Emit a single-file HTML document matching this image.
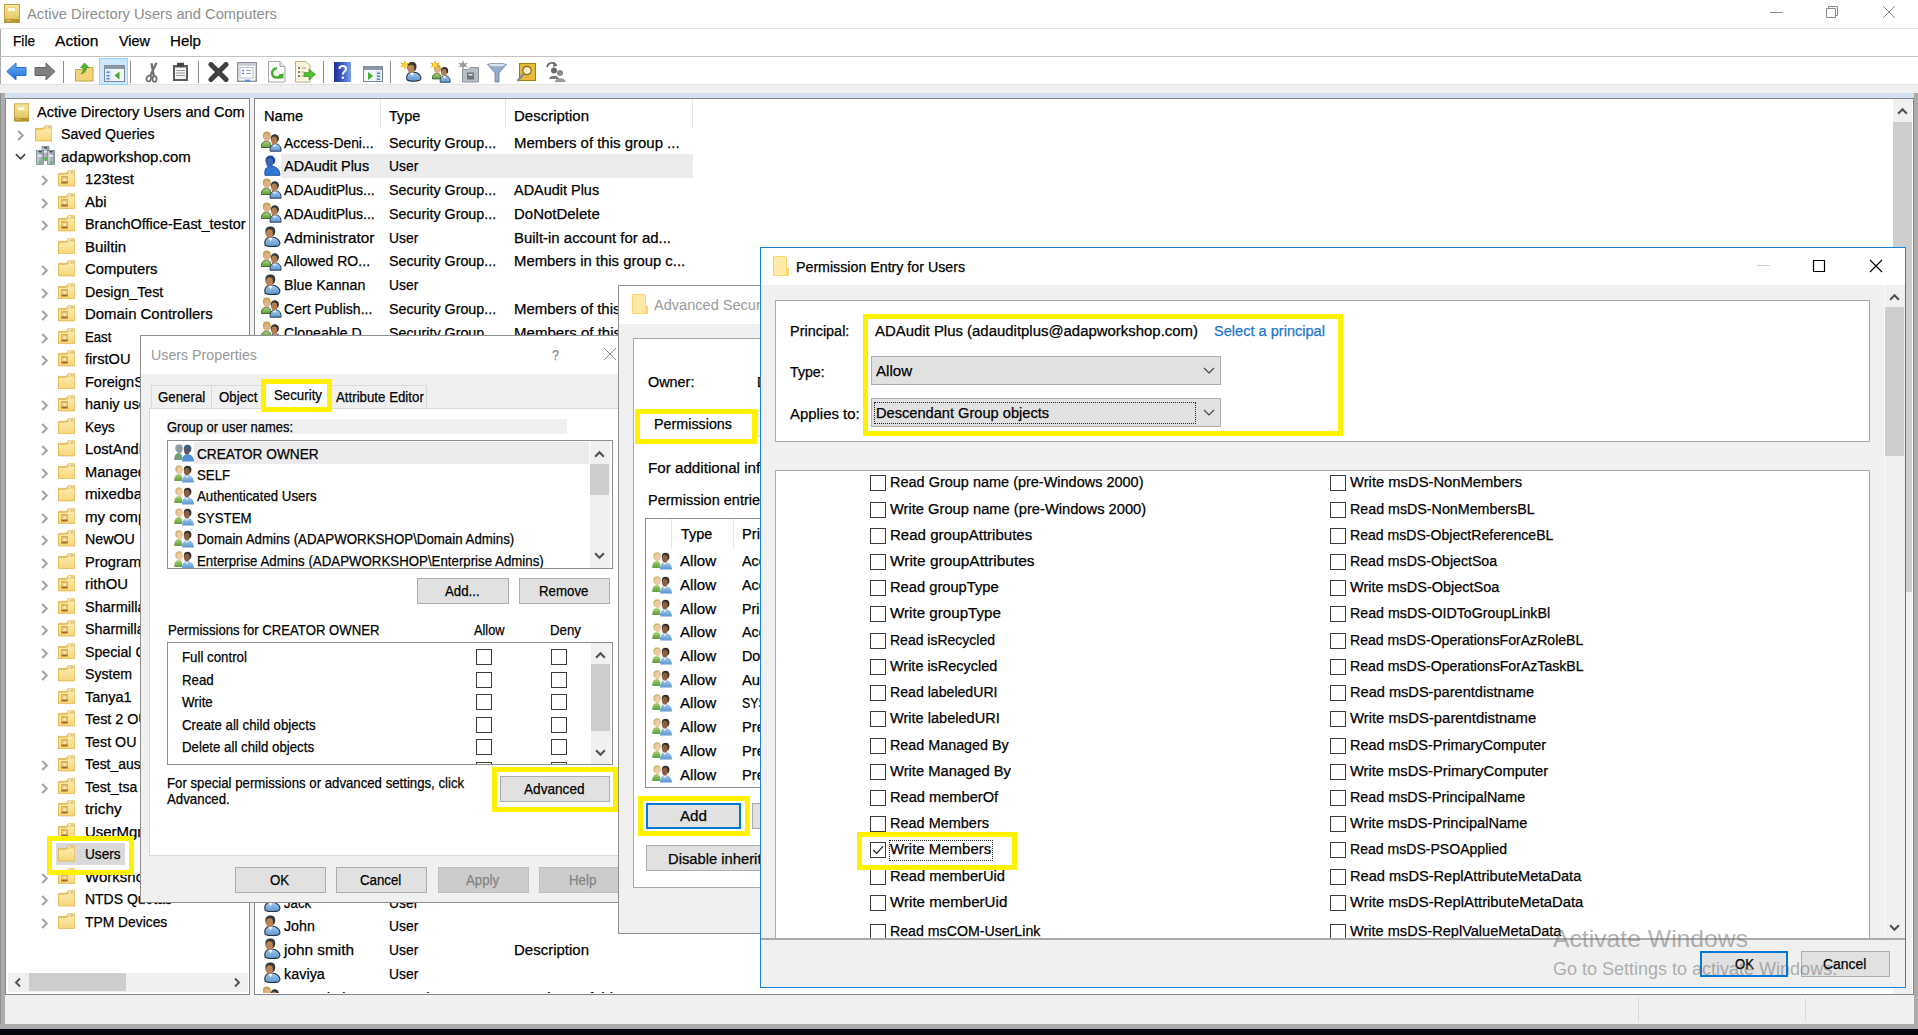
<!DOCTYPE html>
<html lang="en">
<head>
<meta charset="utf-8">
<title>Active Directory Users and Computers</title>
<style>
html,body{margin:0;padding:0}
body{width:1918px;height:1035px;overflow:hidden;background:#fff;font-family:"Liberation Sans",sans-serif;font-size:15px}
#root{position:relative;width:1918px;height:1035px;overflow:hidden;background:#fff}
#root div,#root span.t,#root svg.i{position:absolute;box-sizing:border-box}
.t{white-space:pre;transform-origin:0 50%;display:block;-webkit-text-stroke:0.25px currentColor}
.layer{left:0;top:0;width:1918px;height:1035px}
.btn{background:#e1e1e1;border:1px solid #adadad}
.btnd{background:#cccccc;border:1px solid #bfbfbf}
.btnf{background:#e1e1e1;border:2px solid #0078d7}
.cb{background:#fff;border:1px solid #3c3c3c}
.yl{border:5px solid #fff200}
.wp{background:#fff;border:1px solid #a9a9a9}
.lb{background:#fff;border:1px solid #8b8e94}
.g{background:#f0f0f0}
.thumb{background:#cdcdcd}
</style>
</head>
<body>
<svg width="0" height="0" style="position:absolute">
<defs>
<linearGradient id="gRoot" x1="0" y1="0" x2="0" y2="1"><stop offset="0" stop-color="#f6e9a6"/><stop offset="1" stop-color="#dfbe52"/></linearGradient>
<linearGradient id="gFold" x1="0" y1="0" x2="0" y2="1"><stop offset="0" stop-color="#fdebb0"/><stop offset="1" stop-color="#f6d679"/></linearGradient>
<linearGradient id="gBlue" x1="0" y1="0" x2="0" y2="1"><stop offset="0" stop-color="#6db3f2"/><stop offset="1" stop-color="#1e69de"/></linearGradient>
<linearGradient id="gShirt" x1="0" y1="0" x2="0" y2="1"><stop offset="0" stop-color="#a9cdee"/><stop offset="1" stop-color="#5b93cf"/></linearGradient>
<linearGradient id="gGreen" x1="0" y1="0" x2="0" y2="1"><stop offset="0" stop-color="#a8d27a"/><stop offset="1" stop-color="#5f9f3a"/></linearGradient>
<linearGradient id="gSrv" x1="0" y1="0" x2="1" y2="0"><stop offset="0" stop-color="#c9d2d8"/><stop offset="1" stop-color="#8f9ba3"/></linearGradient>

<symbol id="ic-root" viewBox="0 0 16 19">
<rect x="0.5" y="0.5" width="15" height="18" fill="url(#gRoot)" stroke="#c4a23c"/>
<rect x="3.5" y="3.5" width="8" height="4" fill="#fffbe0" stroke="#ead77f"/>
<rect x="0.5" y="15" width="15" height="3.5" fill="#b8932f"/>
<rect x="2" y="16" width="5" height="1" fill="#d9c27a"/>
</symbol>

<symbol id="ic-folder" viewBox="0 0 18 17">
<path d="M0.5 3.5 H8.5 L10.5 0.8 H17.5 V16.5 H0.5 Z" fill="#f5d57a" stroke="#e3bf57"/>
<rect x="10.5" y="1.6" width="6" height="2.4" fill="#fff"/>
<rect x="13.5" y="1.8" width="2" height="1" fill="#6aa5e8"/>
<path d="M0.5 4.5 H9 L11 3 H17.5 V16.5 H0.5 Z" fill="url(#gFold)" stroke="#ddb852" stroke-width="0.9"/>
</symbol>

<symbol id="ic-ou" viewBox="0 0 18 17">
<path d="M0.5 3.5 H8.5 L10.5 0.8 H17.5 V16.5 H0.5 Z" fill="#f5d57a" stroke="#e3bf57"/>
<rect x="10.5" y="1.6" width="6" height="2.4" fill="#fff"/>
<rect x="13.5" y="1.8" width="2" height="1" fill="#6aa5e8"/>
<path d="M0.5 4.5 H9 L11 3 H17.5 V16.5 H0.5 Z" fill="url(#gFold)" stroke="#ddb852" stroke-width="0.9"/>
<rect x="3.6" y="6.6" width="6.4" height="7.2" fill="#ecd078" stroke="#d2ad4c" stroke-width="0.7"/>
<rect x="3.6" y="6.6" width="6.4" height="1.2" fill="#cfae55"/>
<rect x="3.6" y="12" width="6.4" height="1.8" fill="#a8682a"/>
<rect x="5.8" y="9.2" width="1.8" height="1.6" fill="#fffbe6"/>
</symbol>

<symbol id="ic-domain" viewBox="0 0 19 19">
<rect x="6" y="0.5" width="7" height="14" fill="url(#gSrv)" stroke="#7d8a93" stroke-width="0.8"/>
<ellipse cx="9.5" cy="1.8" rx="2" ry="0.8" fill="#3a4248"/>
<rect x="7.5" y="5" width="4" height="1.6" fill="#eef2f5"/>
<rect x="0.5" y="4.5" width="7" height="14" fill="url(#gSrv)" stroke="#7d8a93" stroke-width="0.8"/>
<ellipse cx="4" cy="5.8" rx="2" ry="0.8" fill="#3a4248"/>
<rect x="2" y="9" width="4" height="1.6" fill="#eef2f5"/>
<rect x="11.5" y="4.5" width="7" height="14" fill="url(#gSrv)" stroke="#7d8a93" stroke-width="0.8"/>
<ellipse cx="15" cy="5.8" rx="2" ry="0.8" fill="#3a4248"/>
<rect x="13" y="9" width="4" height="1.6" fill="#eef2f5"/>
<circle cx="9.5" cy="12.5" r="1.6" fill="#4cc23a"/>
<circle cx="4" cy="16.5" r="1.3" fill="#4cc23a"/>
<circle cx="15" cy="16.5" r="1.3" fill="#4cc23a"/>
</symbol>

<symbol id="ic-user" viewBox="0 0 20 21">
<path d="M4.300 19.4 C3 16 4.200 11.6 9 11 C13 10.6 15.5 11.8 17.6 14.2 C19.6 16.6 19.2 18.8 17.4 19.8 C14 21 7 21 4.300 19.400 Z" fill="url(#gShirt)" stroke="#22303f" stroke-width="1.1"/>
<path d="M7.800 11.8 L9.600 15.4 L11.6 11.8 Z" fill="#f4f7fa"/>
<path d="M4.400 6 C4 2 6.500 0.500 9.600 0.500 C13 0.500 14.6 2.600 14.2 6 C14 8.500 13 9.500 12 10 L6.500 10 C5 9 4.600 8 4.400 6 Z" fill="#3b3835"/>
<ellipse cx="8.500" cy="7.700" rx="3.400" ry="4.400" fill="#b98558"/>
</symbol>

<symbol id="ic-usersel" viewBox="0 0 20 21">
<path d="M4 20.3 C3.2 15.5 5 11.5 9.5 11 C14.5 10.8 19.2 14.5 18.8 20.3 Z" fill="#2f78d6" stroke="#1c4f9e" stroke-width="1"/>
<ellipse cx="9.3" cy="5.4" rx="4.9" ry="4.9" fill="#1f4a9a"/>
<ellipse cx="8.6" cy="7.7" rx="3.5" ry="4.4" fill="#3f68b0"/>
</symbol>

<symbol id="ic-group" viewBox="0 0 21 21">
<path d="M0.500 16.5 C0 12.5 2 10.5 5.500 10.3 C9 10.3 10 12.5 9.800 16.5 Z" fill="url(#gGreen)" stroke="#3e5a2a" stroke-width="0.9"/>
<ellipse cx="5.8" cy="4.7" rx="3.9" ry="4.3" fill="#c5a247"/>
<ellipse cx="5.8" cy="6.5" rx="2.9" ry="4" fill="#e1b184"/>
<path d="M9.200 20.2 C8.600 16 10.5 13 14 12.8 C18 12.8 20.4 15.5 20 20.2 Z" fill="url(#gShirt)" stroke="#2b3f55" stroke-width="1"/>
<path d="M12.2 13.4 L13.8 16.2 L15.4 13.4 Z" fill="#f4f7fa"/>
<ellipse cx="13.8" cy="7.5" rx="4.1" ry="4.2" fill="#35322f"/>
<ellipse cx="13.2" cy="9.4" rx="3" ry="4" fill="#b27d52"/>
</symbol>

<symbol id="ic-prin" viewBox="0 0 20 18">
<path d="M0.300 16 C0 12 1.600 9.400 4.600 9 C7.600 9 8.600 12 8.400 16 Z" fill="url(#gGreen)"/>
<ellipse cx="5" cy="4.200" rx="3.700" ry="4" fill="#d8b877"/>
<ellipse cx="5.600" cy="5.600" rx="2.800" ry="3.600" fill="#ebcba6"/>
<path d="M8.200 17.6 C7.800 13.5 9.600 10.4 13.2 10 C17.2 10 20.2 13.5 19.9 17.6 Z" fill="url(#gShirt)"/>
<path d="M11.4 10.6 L12.8 13.2 L14.4 10.6 Z" fill="#eef3f8"/>
<ellipse cx="13.6" cy="4.800" rx="3.800" ry="4" fill="#34302d"/>
<ellipse cx="12.9" cy="6.600" rx="2.800" ry="3.900" fill="#8a5f40"/>
</symbol>

<symbol id="ic-prinsel" viewBox="0 0 20 18">
<path d="M0.300 16 C0 12 1.600 9.400 4.600 9 C7.600 9 8.600 12 8.400 16 Z" fill="#6f9f78"/>
<ellipse cx="5" cy="4.200" rx="3.700" ry="4" fill="#9aa3a0"/>
<ellipse cx="5.600" cy="5.600" rx="2.800" ry="3.600" fill="#8f9aa2"/>
<path d="M8.200 17.6 C7.800 13.5 9.600 10.4 13.2 10 C17.2 10 20.2 13.5 19.9 17.6 Z" fill="#4f8fd6"/>
<ellipse cx="13.6" cy="4.800" rx="3.800" ry="4" fill="#3c5f8e"/>
<ellipse cx="12.9" cy="6.600" rx="2.800" ry="3.900" fill="#55585e"/>
</symbol>

<symbol id="ic-dlgfolder" viewBox="0 0 16 20">
<path d="M0.500 0.500 H12.5 L13.5 1.500 V12 H15.5 V19.5 H0.500 Z" fill="#ffe9a8" stroke="#ffd466" stroke-width="1"/>
<path d="M13.5 12 H15.5 V19.5 H13.5 Z" fill="#ffd466"/>
</symbol>

<symbol id="ch-r" viewBox="0 0 8 12"><path d="M1.2 1 L6.2 6 L1.2 11" fill="none" stroke="#a3a3a3" stroke-width="2.2"/></symbol>
<symbol id="ch-d" viewBox="0 0 12 8"><path d="M1 1.2 L6 6.2 L11 1.2" fill="none" stroke="#404040" stroke-width="1.8"/></symbol>
<symbol id="sb-u" viewBox="0 0 10 7"><path d="M1 6 L5 2 L9 6" fill="none" stroke="#505050" stroke-width="1.9"/></symbol>
<symbol id="sb-d" viewBox="0 0 10 7"><path d="M1 1 L5 5 L9 1" fill="none" stroke="#505050" stroke-width="1.9"/></symbol>
<symbol id="sb-l" viewBox="0 0 7 10"><path d="M6 1 L2 5 L6 9" fill="none" stroke="#505050" stroke-width="1.9"/></symbol>
<symbol id="sb-r" viewBox="0 0 7 10"><path d="M1 1 L5 5 L1 9" fill="none" stroke="#505050" stroke-width="1.9"/></symbol>
<symbol id="cmb" viewBox="0 0 12 7"><path d="M1 1 L6 6 L11 1" fill="none" stroke="#444" stroke-width="1.2"/></symbol>
</defs>
</svg>
<div id="root">
<div class="layer" id="main">
<svg class="i" style="left:4px;top:4px" width="16" height="19"><use href="#ic-root"/></svg>
<span class="t " style="left:27.0px;top:4.4px;font-size:15.5px;line-height:19px;color:#8e8e8e;transform:scaleX(0.948);-webkit-text-stroke:0;">Active Directory Users and Computers</span>
<svg class="i" style="left:1760px;top:-1px" width="150" height="28"><g stroke="#8a8a8a" stroke-width="1" fill="none"><path d="M10 13.5 H22.5"/><path d="M66.500 9.5 H75.5 V18.5 H66.500 Z M68.5 9.500 V7.500 H77.5 V16.5 H75.5"/><path d="M123 7 L135 19 M135 7 L123 19"/></g></svg>
<div class="" style="left:0px;top:28px;width:1918px;height:1px;background:#e3e3e3"></div>
<div class="" style="left:0px;top:29px;width:1px;height:64px;background:#ababab"></div>
<span class="t " style="left:13.0px;top:31.4px;font-size:15.5px;line-height:19px;color:#000;transform:scaleX(0.881);">File</span>
<span class="t " style="left:55.0px;top:31.4px;font-size:15.5px;line-height:19px;color:#000;transform:scaleX(1.009);">Action</span>
<span class="t " style="left:119.0px;top:31.4px;font-size:15.5px;line-height:19px;color:#000;transform:scaleX(0.930);">View</span>
<span class="t " style="left:170.0px;top:31.4px;font-size:15.5px;line-height:19px;color:#000;transform:scaleX(0.972);">Help</span>
<div class="" style="left:0px;top:56px;width:1918px;height:1px;background:#c3c3c3"></div>
<div class="" style="left:0px;top:84px;width:1918px;height:9px;background:#f0f0f0"></div>
<div class="" style="left:0px;top:84px;width:1918px;height:1px;background:#e4e4e4"></div>
<div class="" style="left:0px;top:93px;width:1918px;height:5px;background:#d3e0ef"></div>
<div class="" style="left:0px;top:93px;width:5px;height:936px;background:#ababab"></div>
<div class="" style="left:0px;top:93px;width:1px;height:936px;background:#909090"></div>
<div class="" style="left:1914px;top:93px;width:4px;height:936px;background:#ababab"></div>
<div class="" style="left:5px;top:995px;width:1909px;height:29px;background:#f0f0f0"></div>
<div class="" style="left:0px;top:1024px;width:1918px;height:5px;background:#ababab"></div>
<div class="" style="left:1638px;top:998px;width:1px;height:24px;background:#dadada"></div>
<div class="" style="left:1805px;top:998px;width:1px;height:24px;background:#dadada"></div>
<div class="" style="left:0px;top:1029px;width:1918px;height:6px;background:#04060b"></div>
<div class="" style="left:5px;top:98px;width:245px;height:897px;background:#fff;border:1px solid #828790"></div>
<div class="" style="left:250px;top:98px;width:4px;height:897px;background:#f0f0f0"></div>
<div class="" style="left:254px;top:98px;width:1660px;height:897px;background:#fff;border:1px solid #828790"></div>
<svg class="i" style="left:6px;top:62px" width="21" height="20" viewBox="0 0 21 20"><path d="M0.800 9.500 L10 1 V5.500 H20 V13.5 H10 V18 Z" fill="url(#gBlue)" stroke="#2a6fc9" stroke-width="1"/></svg>
<svg class="i" style="left:34px;top:62px" width="22" height="20" viewBox="0 0 22 20"><path d="M21 9.500 L12 1 V5.500 H1 V13.5 H12 V18 Z" fill="#808080" stroke="#666" stroke-width="1"/></svg>
<div class="" style="left:63px;top:61px;width:1px;height:22px;background:#8d8d8d"></div>
<svg class="i" style="left:75px;top:62px" width="19" height="20" viewBox="0 0 19 20"><path d="M0.500 7.500 H7 L9 5.500 H18 V19 H0.500 Z" fill="#f3d27a" stroke="#caa445"/><path d="M9.500 1 L14 5.500 H11.5 C11.5 9 9.500 11 6 12 C8 10 8.500 8 8 5.500 H5.500 Z" fill="#4cb82e" stroke="#2f8f1c" stroke-width="0.6"/></svg>
<div class="" style="left:99px;top:58px;width:29px;height:27px;background:#cce8ff;border:1px solid #99d1ff"></div>
<svg class="i" style="left:104px;top:65px" width="21" height="17" viewBox="0 0 21 17"><rect x="0.500" y="0.500" width="20" height="16" fill="#f4f6f9" stroke="#7a8796"/><rect x="0.500" y="0.500" width="20" height="3.5" fill="#8b98a8"/><rect x="1.500" y="5" width="6" height="11" fill="#dfe7f1"/><rect x="2.5" y="6.500" width="3" height="1.5" fill="#4a86d8"/><rect x="2.5" y="10" width="3" height="1.5" fill="#4a86d8"/><rect x="2.5" y="13" width="3" height="1.5" fill="#4a86d8"/><path d="M15.5 6.500 V14.5 L10.5 10.5 Z" fill="#3fae2a"/></svg>
<div class="" style="left:130px;top:61px;width:1px;height:22px;background:#8d8d8d"></div>
<svg class="i" style="left:144px;top:62px" width="17" height="21" viewBox="0 0 17 21"><path d="M12.5 0.800 L6.200 14 M7.500 1.200 L9.800 14" stroke="#6e6e6e" stroke-width="2.2" fill="none"/><ellipse cx="4.800" cy="16.6" rx="2.200" ry="2.900" fill="none" stroke="#6e6e6e" stroke-width="1.7" transform="rotate(20 4.800 16.6)"/><ellipse cx="10.6" cy="17" rx="2" ry="2.800" fill="none" stroke="#6e6e6e" stroke-width="1.7"/></svg>
<svg class="i" style="left:172px;top:62px" width="17" height="20" viewBox="0 0 17 20"><rect x="1" y="3" width="15" height="16" fill="#5c5c5c"/><rect x="3" y="5.500" width="11" height="11.5" fill="#f4f4f4"/><rect x="5" y="0.800" width="7" height="4" fill="#444"/><path d="M4 8.500 H13 M4 11 H13 M4 13.5 H13" stroke="#9a9a9a" stroke-width="1"/></svg>
<div class="" style="left:198px;top:61px;width:1px;height:22px;background:#8d8d8d"></div>
<svg class="i" style="left:208px;top:62px" width="21" height="20" viewBox="0 0 21 20"><path d="M3 2.500 L18 17.5 M18 2.500 L3 17.5" stroke="#404040" stroke-width="5" stroke-linecap="round"/></svg>
<svg class="i" style="left:237px;top:62px" width="20" height="22" viewBox="0 0 20 22"><rect x="0.700" y="0.700" width="18.6" height="18.6" fill="#f7f9fc" stroke="#8c929a" stroke-width="1.4"/><rect x="1.400" y="1.400" width="17.2" height="2.400" fill="#c5ccd6"/><rect x="3" y="5.500" width="13" height="10.5" fill="#fff" stroke="#aab4c2" stroke-width="0.8"/><path d="M5 8.500 H7 M5 11.5 H7" stroke="#4a86d8" stroke-width="1.3"/><path d="M9 8.500 H14 M9 11.5 H14" stroke="#9aa4b2" stroke-width="1.2"/><rect x="8" y="17.6" width="5" height="2" fill="#3f8fe8"/></svg>
<svg class="i" style="left:268px;top:61px" width="18" height="22" viewBox="0 0 18 22"><path d="M0.500 0.500 H12 L17 5.500 V21 H0.500 Z" fill="#fbfbfb" stroke="#a9a9a9"/><path d="M12 0.500 V5.500 H17" fill="#e6e6e6" stroke="#a9a9a9"/><path d="M13 13 A4.500 4.500 0 1 1 9 7.500" fill="none" stroke="#44b02a" stroke-width="2.6"/><path d="M9.500 17.5 L15.5 17.5 L15.5 11.5 Z" fill="#44b02a"/></svg>
<svg class="i" style="left:295px;top:61px" width="21" height="22" viewBox="0 0 21 22"><path d="M0.500 0.500 H11 L15 4.500 V21 H0.500 Z" fill="#fdf6d8" stroke="#b9b08a"/><path d="M3 7 H5 M3 11 H5 M3 15 H5" stroke="#555" stroke-width="1.4"/><path d="M6.500 7 H11 M6.500 11 H9 M6.500 15 H9" stroke="#999" stroke-width="1"/><path d="M9 11.5 H14 V8 L20.5 13.5 L14 19 V15.5 H9 Z" fill="#4cc02e" stroke="#2f8f1c" stroke-width="0.6"/></svg>
<div class="" style="left:323px;top:61px;width:1px;height:22px;background:#8d8d8d"></div>
<svg class="i" style="left:334px;top:62px" width="17" height="20" viewBox="0 0 17 20"><defs><linearGradient id="gHelp" x1="0" y1="0" x2="1" y2="0"><stop offset="0" stop-color="#1f2f96"/><stop offset="0.55" stop-color="#3f5fd0"/><stop offset="1" stop-color="#7fa0ea"/></linearGradient></defs><rect x="0" y="0" width="17" height="20" fill="url(#gHelp)"/><path d="M5.500 7 C5.500 3 12 3 12 7 C12 9.500 8.800 9.500 8.800 12.5" fill="none" stroke="#eef2ff" stroke-width="2.2"/><rect x="7.700" y="14.5" width="2.200" height="2.400" fill="#eef2ff"/></svg>
<svg class="i" style="left:363px;top:66px" width="20" height="16" viewBox="0 0 20 16"><rect x="0.500" y="0.500" width="19" height="15" fill="#f4f6f9" stroke="#7a8796"/><rect x="0.500" y="0.500" width="19" height="3.5" fill="#8b98a8"/><rect x="12.5" y="5" width="6" height="10" fill="#dfe7f1"/><rect x="14" y="6.500" width="3" height="1.5" fill="#4a86d8"/><rect x="14" y="9.500" width="3" height="1.5" fill="#4a86d8"/><rect x="14" y="12.5" width="3" height="1.5" fill="#4a86d8"/><path d="M5 6 V14 L10 10 Z" fill="#3fae2a"/></svg>
<div class="" style="left:390px;top:61px;width:1px;height:22px;background:#8d8d8d"></div>
<svg class="i" style="left:403px;top:61px" width="19" height="21"><use href="#ic-user"/></svg>
<svg class="i" style="left:400px;top:60px" width="10" height="10" viewBox="0 0 10 10"><path d="M5 0 L6.200 3.500 L10 2.500 L7.500 5 L10 7.500 L6.200 6.500 L5 10 L3.800 6.500 L0 7.500 L2.500 5 L0 2.500 L3.800 3.500 Z" fill="#f6a800"/><circle cx="5" cy="5" r="2.200" fill="#ffd84a"/></svg>
<svg class="i" style="left:432px;top:64px" width="19" height="19"><use href="#ic-group"/></svg>
<svg class="i" style="left:430px;top:60px" width="10" height="10" viewBox="0 0 10 10"><path d="M5 0 L6.200 3.500 L10 2.500 L7.500 5 L10 7.500 L6.200 6.500 L5 10 L3.800 6.500 L0 7.500 L2.500 5 L0 2.500 L3.800 3.500 Z" fill="#f6a800"/><circle cx="5" cy="5" r="2.200" fill="#ffd84a"/></svg>
<svg class="i" style="left:458px;top:60px" width="21" height="23" viewBox="0 0 21 23"><path d="M4.500 9.500 H10 L12 7.500 H20.5 V22 H4.500 Z" fill="#b9bec4" stroke="#8c9299"/><rect x="9" y="12.5" width="7" height="7" fill="#6e747b"/><rect x="10.5" y="14" width="4" height="1.5" fill="#e8e8e8"/><path d="M5 0 L6.200 3.500 L10 2.500 L7.500 5 L10 7.500 L6.200 6.500 L5 10 L3.800 6.500 L0 7.500 L2.500 5 L0 2.500 L3.800 3.500 Z" fill="#9a9a9a"/></svg>
<svg class="i" style="left:487px;top:63px" width="20" height="20" viewBox="0 0 20 20"><path d="M0.500 1.500 C5 -0.300 15 -0.300 19.5 1.500 L12 10 V19 H8 V10 Z" fill="#93abc6" stroke="#6f86a0" stroke-width="0.8"/><ellipse cx="10" cy="2" rx="8" ry="1.300" fill="#dbe5f0"/></svg>
<svg class="i" style="left:516px;top:62px" width="20" height="21" viewBox="0 0 20 21"><rect x="3.500" y="1.500" width="16" height="17" fill="#e9b93a" stroke="#a67c12"/><circle cx="11" cy="8.500" r="4.200" fill="#fdf3cf" stroke="#8a6a1a" stroke-width="1.2"/><path d="M7.500 12 L1.500 19" stroke="#8a8a8a" stroke-width="2.4"/></svg>
<svg class="i" style="left:546px;top:61px" width="20" height="22" viewBox="0 0 20 22"><path d="M1 6 A5 5 0 0 1 10 4" fill="none" stroke="#666" stroke-width="1.6"/><path d="M8 1 L11.5 4.500 L7 6 Z" fill="#666"/><circle cx="8" cy="9.500" r="3" fill="#6a6a6a"/><path d="M3 18 C3 13.5 13 13.5 13 18 Z" fill="#7a7a7a"/><circle cx="14" cy="12" r="3" fill="#8a8a8a"/><path d="M9 21 C9 16 19.5 16 19.5 21 Z" fill="#9a9a9a"/></svg>
<div class="layer" style="clip-path:inset(99px 1669px 42px 7px)">
<svg class="i" style="left:13.8px;top:103.0px" width="15.4" height="19"><use href="#ic-root"/></svg>
<span class="t " style="left:37.0px;top:101.7px;font-size:15.5px;line-height:19px;color:#000;transform:scaleX(0.942);">Active Directory Users and Com</span>
<svg class="i" style="left:17.4px;top:130.3px" width="7.5" height="11"><use href="#ch-r"/></svg>
<svg class="i" style="left:35px;top:125.3px" width="17.4" height="16.4"><use href="#ic-folder"/></svg>
<span class="t " style="left:61.0px;top:124.2px;font-size:15.5px;line-height:19px;color:#000;transform:scaleX(0.912);">Saved Queries</span>
<svg class="i" style="left:15px;top:153.4px" width="11" height="7.4"><use href="#ch-d"/></svg>
<svg class="i" style="left:36px;top:146px" width="19" height="19"><use href="#ic-domain"/></svg>
<span class="t " style="left:61.0px;top:146.7px;font-size:15.5px;line-height:19px;color:#000;transform:scaleX(0.966);">adapworkshop.com</span>
<svg class="i" style="left:41.4px;top:175.3px" width="7.5" height="11"><use href="#ch-r"/></svg>
<svg class="i" style="left:58px;top:170.3px" width="17.4" height="16.4"><use href="#ic-ou"/></svg>
<span class="t " style="left:85.0px;top:169.2px;font-size:15.5px;line-height:19px;color:#000;transform:scaleX(0.959);">123test</span>
<svg class="i" style="left:41.4px;top:197.8px" width="7.5" height="11"><use href="#ch-r"/></svg>
<svg class="i" style="left:58px;top:192.8px" width="17.4" height="16.4"><use href="#ic-ou"/></svg>
<span class="t " style="left:85.0px;top:191.7px;font-size:15.5px;line-height:19px;color:#000;transform:scaleX(0.967);">Abi</span>
<svg class="i" style="left:41.4px;top:220.3px" width="7.5" height="11"><use href="#ch-r"/></svg>
<svg class="i" style="left:58px;top:215.3px" width="17.4" height="16.4"><use href="#ic-ou"/></svg>
<span class="t " style="left:85.0px;top:214.2px;font-size:15.5px;line-height:19px;color:#000;transform:scaleX(0.929);">BranchOffice-East_testor</span>
<svg class="i" style="left:58px;top:237.8px" width="17.4" height="16.4"><use href="#ic-folder"/></svg>
<span class="t " style="left:85.0px;top:236.7px;font-size:15.5px;line-height:19px;color:#000;transform:scaleX(0.975);">Builtin</span>
<svg class="i" style="left:41.4px;top:265.3px" width="7.5" height="11"><use href="#ch-r"/></svg>
<svg class="i" style="left:58px;top:260.3px" width="17.4" height="16.4"><use href="#ic-folder"/></svg>
<span class="t " style="left:85.0px;top:259.2px;font-size:15.5px;line-height:19px;color:#000;transform:scaleX(0.956);">Computers</span>
<svg class="i" style="left:41.4px;top:287.8px" width="7.5" height="11"><use href="#ch-r"/></svg>
<svg class="i" style="left:58px;top:282.8px" width="17.4" height="16.4"><use href="#ic-ou"/></svg>
<span class="t " style="left:85.0px;top:281.7px;font-size:15.5px;line-height:19px;color:#000;transform:scaleX(0.918);">Design_Test</span>
<svg class="i" style="left:41.4px;top:310.3px" width="7.5" height="11"><use href="#ch-r"/></svg>
<svg class="i" style="left:58px;top:305.3px" width="17.4" height="16.4"><use href="#ic-ou"/></svg>
<span class="t " style="left:85.0px;top:304.2px;font-size:15.5px;line-height:19px;color:#000;transform:scaleX(0.963);">Domain Controllers</span>
<svg class="i" style="left:41.4px;top:332.8px" width="7.5" height="11"><use href="#ch-r"/></svg>
<svg class="i" style="left:58px;top:327.8px" width="17.4" height="16.4"><use href="#ic-ou"/></svg>
<span class="t " style="left:85.0px;top:326.7px;font-size:15.5px;line-height:19px;color:#000;transform:scaleX(0.849);">East</span>
<svg class="i" style="left:41.4px;top:355.3px" width="7.5" height="11"><use href="#ch-r"/></svg>
<svg class="i" style="left:58px;top:350.3px" width="17.4" height="16.4"><use href="#ic-ou"/></svg>
<span class="t " style="left:85.0px;top:349.2px;font-size:15.5px;line-height:19px;color:#000;transform:scaleX(0.945);">firstOU</span>
<svg class="i" style="left:58px;top:372.8px" width="17.4" height="16.4"><use href="#ic-folder"/></svg>
<span class="t " style="left:85.0px;top:371.7px;font-size:15.5px;line-height:19px;color:#000;transform:scaleX(0.936);">ForeignSecurityPrincipals</span>
<svg class="i" style="left:41.4px;top:400.3px" width="7.5" height="11"><use href="#ch-r"/></svg>
<svg class="i" style="left:58px;top:395.3px" width="17.4" height="16.4"><use href="#ic-ou"/></svg>
<span class="t " style="left:85.0px;top:394.2px;font-size:15.5px;line-height:19px;color:#000;transform:scaleX(0.933);">haniy users</span>
<svg class="i" style="left:41.4px;top:422.8px" width="7.5" height="11"><use href="#ch-r"/></svg>
<svg class="i" style="left:58px;top:417.8px" width="17.4" height="16.4"><use href="#ic-folder"/></svg>
<span class="t " style="left:85.0px;top:416.7px;font-size:15.5px;line-height:19px;color:#000;transform:scaleX(0.864);">Keys</span>
<svg class="i" style="left:41.4px;top:445.3px" width="7.5" height="11"><use href="#ch-r"/></svg>
<svg class="i" style="left:58px;top:440.3px" width="17.4" height="16.4"><use href="#ic-folder"/></svg>
<span class="t " style="left:85.0px;top:439.2px;font-size:15.5px;line-height:19px;color:#000;transform:scaleX(0.943);">LostAndFound</span>
<svg class="i" style="left:41.4px;top:467.8px" width="7.5" height="11"><use href="#ch-r"/></svg>
<svg class="i" style="left:58px;top:462.8px" width="17.4" height="16.4"><use href="#ic-folder"/></svg>
<span class="t " style="left:85.0px;top:461.7px;font-size:15.5px;line-height:19px;color:#000;transform:scaleX(0.943);">Managed Service Accounts</span>
<svg class="i" style="left:41.4px;top:490.3px" width="7.5" height="11"><use href="#ch-r"/></svg>
<svg class="i" style="left:58px;top:485.3px" width="17.4" height="16.4"><use href="#ic-folder"/></svg>
<span class="t " style="left:85.0px;top:484.2px;font-size:15.5px;line-height:19px;color:#000;transform:scaleX(0.976);">mixedbag</span>
<svg class="i" style="left:41.4px;top:512.8px" width="7.5" height="11"><use href="#ch-r"/></svg>
<svg class="i" style="left:58px;top:507.8px" width="17.4" height="16.4"><use href="#ic-ou"/></svg>
<span class="t " style="left:85.0px;top:506.7px;font-size:15.5px;line-height:19px;color:#000;transform:scaleX(0.975);">my computers</span>
<svg class="i" style="left:41.4px;top:535.3px" width="7.5" height="11"><use href="#ch-r"/></svg>
<svg class="i" style="left:58px;top:530.3px" width="17.4" height="16.4"><use href="#ic-ou"/></svg>
<span class="t " style="left:85.0px;top:529.2px;font-size:15.5px;line-height:19px;color:#000;transform:scaleX(0.919);">NewOU</span>
<svg class="i" style="left:41.4px;top:557.8px" width="7.5" height="11"><use href="#ch-r"/></svg>
<svg class="i" style="left:58px;top:552.8px" width="17.4" height="16.4"><use href="#ic-folder"/></svg>
<span class="t " style="left:85.0px;top:551.7px;font-size:15.5px;line-height:19px;color:#000;transform:scaleX(0.946);">Program Data</span>
<svg class="i" style="left:41.4px;top:580.3px" width="7.5" height="11"><use href="#ch-r"/></svg>
<svg class="i" style="left:58px;top:575.3px" width="17.4" height="16.4"><use href="#ic-ou"/></svg>
<span class="t " style="left:85.0px;top:574.2px;font-size:15.5px;line-height:19px;color:#000;transform:scaleX(0.960);">rithOU</span>
<svg class="i" style="left:41.4px;top:602.8px" width="7.5" height="11"><use href="#ch-r"/></svg>
<svg class="i" style="left:58px;top:597.8px" width="17.4" height="16.4"><use href="#ic-ou"/></svg>
<span class="t " style="left:85.0px;top:596.7px;font-size:15.5px;line-height:19px;color:#000;transform:scaleX(0.936);">Sharmilla</span>
<svg class="i" style="left:41.4px;top:625.3px" width="7.5" height="11"><use href="#ch-r"/></svg>
<svg class="i" style="left:58px;top:620.3px" width="17.4" height="16.4"><use href="#ic-ou"/></svg>
<span class="t " style="left:85.0px;top:619.2px;font-size:15.5px;line-height:19px;color:#000;transform:scaleX(0.924);">Sharmilla OU</span>
<svg class="i" style="left:41.4px;top:647.8px" width="7.5" height="11"><use href="#ch-r"/></svg>
<svg class="i" style="left:58px;top:642.8px" width="17.4" height="16.4"><use href="#ic-ou"/></svg>
<span class="t " style="left:85.0px;top:641.7px;font-size:15.5px;line-height:19px;color:#000;transform:scaleX(0.914);">Special Characters</span>
<svg class="i" style="left:41.4px;top:670.3px" width="7.5" height="11"><use href="#ch-r"/></svg>
<svg class="i" style="left:58px;top:665.3px" width="17.4" height="16.4"><use href="#ic-folder"/></svg>
<span class="t " style="left:85.0px;top:664.2px;font-size:15.5px;line-height:19px;color:#000;transform:scaleX(0.912);">System</span>
<svg class="i" style="left:58px;top:687.8px" width="17.4" height="16.4"><use href="#ic-ou"/></svg>
<span class="t " style="left:85.0px;top:686.7px;font-size:15.5px;line-height:19px;color:#000;transform:scaleX(0.933);">Tanya1</span>
<svg class="i" style="left:58px;top:710.3px" width="17.4" height="16.4"><use href="#ic-ou"/></svg>
<span class="t " style="left:85.0px;top:709.2px;font-size:15.5px;line-height:19px;color:#000;transform:scaleX(0.924);">Test 2 OU</span>
<svg class="i" style="left:58px;top:732.8px" width="17.4" height="16.4"><use href="#ic-ou"/></svg>
<span class="t " style="left:85.0px;top:731.7px;font-size:15.5px;line-height:19px;color:#000;transform:scaleX(0.919);">Test OU</span>
<svg class="i" style="left:41.4px;top:760.3px" width="7.5" height="11"><use href="#ch-r"/></svg>
<svg class="i" style="left:58px;top:755.3px" width="17.4" height="16.4"><use href="#ic-ou"/></svg>
<span class="t " style="left:85.0px;top:754.2px;font-size:15.5px;line-height:19px;color:#000;transform:scaleX(0.896);">Test_aus</span>
<svg class="i" style="left:41.4px;top:782.8px" width="7.5" height="11"><use href="#ch-r"/></svg>
<svg class="i" style="left:58px;top:777.8px" width="17.4" height="16.4"><use href="#ic-ou"/></svg>
<span class="t " style="left:85.0px;top:776.7px;font-size:15.5px;line-height:19px;color:#000;transform:scaleX(0.904);">Test_tsa</span>
<svg class="i" style="left:58px;top:800.3px" width="17.4" height="16.4"><use href="#ic-ou"/></svg>
<span class="t " style="left:85.0px;top:799.2px;font-size:15.5px;line-height:19px;color:#000;transform:scaleX(0.990);">trichy</span>
<svg class="i" style="left:58px;top:822.8px" width="17.4" height="16.4"><use href="#ic-ou"/></svg>
<span class="t " style="left:85.0px;top:821.7px;font-size:15.5px;line-height:19px;color:#000;transform:scaleX(0.965);">UserMgmt</span>
<div class="" style="left:56px;top:843px;width:69px;height:22px;background:#d9d9d9"></div>
<svg class="i" style="left:58px;top:845.3px" width="17.4" height="16.4"><use href="#ic-folder"/></svg>
<span class="t " style="left:85.0px;top:844.2px;font-size:15.5px;line-height:19px;color:#000;transform:scaleX(0.881);">Users</span>
<svg class="i" style="left:41.4px;top:872.8px" width="7.5" height="11"><use href="#ch-r"/></svg>
<svg class="i" style="left:58px;top:867.8px" width="17.4" height="16.4"><use href="#ic-ou"/></svg>
<span class="t " style="left:85.0px;top:866.7px;font-size:15.5px;line-height:19px;color:#000;transform:scaleX(0.969);">Workshop</span>
<svg class="i" style="left:41.4px;top:895.3px" width="7.5" height="11"><use href="#ch-r"/></svg>
<svg class="i" style="left:58px;top:890.3px" width="17.4" height="16.4"><use href="#ic-folder"/></svg>
<span class="t " style="left:85.0px;top:889.2px;font-size:15.5px;line-height:19px;color:#000;transform:scaleX(0.901);">NTDS Quotas</span>
<svg class="i" style="left:41.4px;top:917.8px" width="7.5" height="11"><use href="#ch-r"/></svg>
<svg class="i" style="left:58px;top:912.8px" width="17.4" height="16.4"><use href="#ic-folder"/></svg>
<span class="t " style="left:85.0px;top:911.7px;font-size:15.5px;line-height:19px;color:#000;transform:scaleX(0.893);">TPM Devices</span>
</div>
<div class="yl" style="left:47px;top:836px;width:87px;height:39px;"></div>
<div class="" style="left:8px;top:973px;width:240px;height:19px;background:#f0f0f0"></div>
<svg class="i" style="left:14px;top:977px" width="7" height="11"><use href="#sb-l"/></svg>
<svg class="i" style="left:234px;top:977px" width="7" height="11"><use href="#sb-r"/></svg>
<div class="thumb" style="left:29px;top:973px;width:97px;height:18px;"></div>
<span class="t " style="left:264.0px;top:105.5px;font-size:15.5px;line-height:19px;color:#000;transform:scaleX(0.946);">Name</span>
<span class="t " style="left:389.0px;top:105.5px;font-size:15.5px;line-height:19px;color:#000;transform:scaleX(0.935);">Type</span>
<span class="t " style="left:514.0px;top:105.5px;font-size:15.5px;line-height:19px;color:#000;transform:scaleX(0.967);">Description</span>
<div class="" style="left:380px;top:99px;width:1px;height:29px;background:#e5e5e5"></div>
<div class="" style="left:505px;top:99px;width:1px;height:29px;background:#e5e5e5"></div>
<div class="" style="left:692px;top:99px;width:1px;height:29px;background:#e5e5e5"></div>
<div class="" style="left:1893px;top:99px;width:19px;height:895px;background:#f0f0f0"></div>
<svg class="i" style="left:1897px;top:107px" width="11" height="8"><use href="#sb-u"/></svg>
<div class="thumb" style="left:1893px;top:122px;width:19px;height:470px;"></div>
<div class="" style="left:1912px;top:99px;width:1px;height:895px;background:#fff"></div>
<div class="layer" style="clip-path:inset(99px 26px 42px 255px)">
<svg class="i" style="left:261px;top:131px" width="21" height="21"><use href="#ic-group"/></svg>
<span class="t " style="left:284.0px;top:132.5px;font-size:15.5px;line-height:19px;color:#000;transform:scaleX(0.896);">Access-Deni...</span>
<span class="t " style="left:389.0px;top:132.5px;font-size:15.5px;line-height:19px;color:#000;transform:scaleX(0.921);">Security Group...</span>
<span class="t " style="left:514.0px;top:132.5px;font-size:15.5px;line-height:19px;color:#000;transform:scaleX(0.966);">Members of this group ...</span>
<div class="" style="left:281px;top:154px;width:412px;height:24px;background:#ececec"></div>
<svg class="i" style="left:261px;top:155px" width="20" height="21"><use href="#ic-usersel"/></svg>
<span class="t " style="left:284.0px;top:156.3px;font-size:15.5px;line-height:19px;color:#000;transform:scaleX(0.932);">ADAudit Plus</span>
<span class="t " style="left:389.0px;top:156.3px;font-size:15.5px;line-height:19px;color:#000;transform:scaleX(0.894);">User</span>
<svg class="i" style="left:261px;top:178px" width="21" height="21"><use href="#ic-group"/></svg>
<span class="t " style="left:284.0px;top:180.0px;font-size:15.5px;line-height:19px;color:#000;transform:scaleX(0.908);">ADAuditPlus...</span>
<span class="t " style="left:389.0px;top:180.0px;font-size:15.5px;line-height:19px;color:#000;transform:scaleX(0.921);">Security Group...</span>
<span class="t " style="left:514.0px;top:180.0px;font-size:15.5px;line-height:19px;color:#000;transform:scaleX(0.932);">ADAudit Plus</span>
<svg class="i" style="left:261px;top:202px" width="21" height="21"><use href="#ic-group"/></svg>
<span class="t " style="left:284.0px;top:203.8px;font-size:15.5px;line-height:19px;color:#000;transform:scaleX(0.908);">ADAuditPlus...</span>
<span class="t " style="left:389.0px;top:203.8px;font-size:15.5px;line-height:19px;color:#000;transform:scaleX(0.921);">Security Group...</span>
<span class="t " style="left:514.0px;top:203.8px;font-size:15.5px;line-height:19px;color:#000;transform:scaleX(0.966);">DoNotDelete</span>
<svg class="i" style="left:261px;top:226px" width="20" height="21"><use href="#ic-user"/></svg>
<span class="t " style="left:284.0px;top:227.5px;font-size:15.5px;line-height:19px;color:#000;transform:scaleX(0.989);">Administrator</span>
<span class="t " style="left:389.0px;top:227.5px;font-size:15.5px;line-height:19px;color:#000;transform:scaleX(0.894);">User</span>
<span class="t " style="left:514.0px;top:227.5px;font-size:15.5px;line-height:19px;color:#000;transform:scaleX(0.964);">Built-in account for ad...</span>
<svg class="i" style="left:261px;top:250px" width="21" height="21"><use href="#ic-group"/></svg>
<span class="t " style="left:284.0px;top:251.3px;font-size:15.5px;line-height:19px;color:#000;transform:scaleX(0.908);">Allowed RO...</span>
<span class="t " style="left:389.0px;top:251.3px;font-size:15.5px;line-height:19px;color:#000;transform:scaleX(0.921);">Security Group...</span>
<span class="t " style="left:514.0px;top:251.3px;font-size:15.5px;line-height:19px;color:#000;transform:scaleX(0.960);">Members in this group c...</span>
<svg class="i" style="left:261px;top:274px" width="20" height="21"><use href="#ic-user"/></svg>
<span class="t " style="left:284.0px;top:275.0px;font-size:15.5px;line-height:19px;color:#000;transform:scaleX(0.916);">Blue Kannan</span>
<span class="t " style="left:389.0px;top:275.0px;font-size:15.5px;line-height:19px;color:#000;transform:scaleX(0.894);">User</span>
<svg class="i" style="left:261px;top:297px" width="21" height="21"><use href="#ic-group"/></svg>
<span class="t " style="left:284.0px;top:298.8px;font-size:15.5px;line-height:19px;color:#000;transform:scaleX(0.908);">Cert Publish...</span>
<span class="t " style="left:389.0px;top:298.8px;font-size:15.5px;line-height:19px;color:#000;transform:scaleX(0.921);">Security Group...</span>
<span class="t " style="left:514.0px;top:298.8px;font-size:15.5px;line-height:19px;color:#000;transform:scaleX(0.966);">Members of this group ...</span>
<svg class="i" style="left:261px;top:321px" width="21" height="21"><use href="#ic-group"/></svg>
<span class="t " style="left:284.0px;top:322.5px;font-size:15.5px;line-height:19px;color:#000;transform:scaleX(0.912);">Cloneable D...</span>
<span class="t " style="left:389.0px;top:322.5px;font-size:15.5px;line-height:19px;color:#000;transform:scaleX(0.921);">Security Group...</span>
<span class="t " style="left:514.0px;top:322.5px;font-size:15.5px;line-height:19px;color:#000;transform:scaleX(0.971);">Members of this group t...</span>
<svg class="i" style="left:261px;top:891px" width="20" height="21"><use href="#ic-user"/></svg>
<span class="t " style="left:284.0px;top:892.5px;font-size:15.5px;line-height:19px;color:#000;transform:scaleX(0.852);">Jack</span>
<span class="t " style="left:389.0px;top:892.5px;font-size:15.5px;line-height:19px;color:#000;transform:scaleX(0.894);">User</span>
<svg class="i" style="left:261px;top:915px" width="20" height="21"><use href="#ic-user"/></svg>
<span class="t " style="left:284.0px;top:916.3px;font-size:15.5px;line-height:19px;color:#000;transform:scaleX(0.918);">John</span>
<span class="t " style="left:389.0px;top:916.3px;font-size:15.5px;line-height:19px;color:#000;transform:scaleX(0.894);">User</span>
<svg class="i" style="left:261px;top:938px" width="20" height="21"><use href="#ic-user"/></svg>
<span class="t " style="left:284.0px;top:940.0px;font-size:15.5px;line-height:19px;color:#000;transform:scaleX(0.992);">john smith</span>
<span class="t " style="left:389.0px;top:940.0px;font-size:15.5px;line-height:19px;color:#000;transform:scaleX(0.894);">User</span>
<span class="t " style="left:514.0px;top:940.0px;font-size:15.5px;line-height:19px;color:#000;transform:scaleX(0.967);">Description</span>
<svg class="i" style="left:261px;top:962px" width="20" height="21"><use href="#ic-user"/></svg>
<span class="t " style="left:284.0px;top:963.8px;font-size:15.5px;line-height:19px;color:#000;transform:scaleX(0.930);">kaviya</span>
<span class="t " style="left:389.0px;top:963.8px;font-size:15.5px;line-height:19px;color:#000;transform:scaleX(0.894);">User</span>
<svg class="i" style="left:261px;top:986px" width="21" height="21"><use href="#ic-group"/></svg>
<span class="t " style="left:284.0px;top:987.5px;font-size:15.5px;line-height:19px;color:#000;transform:scaleX(0.941);">Key Admins</span>
<span class="t " style="left:389.0px;top:987.5px;font-size:15.5px;line-height:19px;color:#000;transform:scaleX(0.921);">Security Group...</span>
<span class="t " style="left:514.0px;top:987.5px;font-size:15.5px;line-height:19px;color:#000;transform:scaleX(0.966);">Members of this group ...</span>
</div>
</div>
<div class="layer" id="dlg1" style="clip-path:inset(335px 1300px 132px 140px)">
<div class="" style="left:140px;top:335px;width:500px;height:568px;background:#f0f0f0;border:1px solid #8f8f8f"></div>
<div class="" style="left:141px;top:336px;width:498px;height:38px;background:#fff"></div>
<span class="t " style="left:151.0px;top:345.1px;font-size:15.5px;line-height:19px;color:#999;transform:scaleX(0.918);-webkit-text-stroke:0;">Users Properties</span>
<span class="t " style="left:551.5px;top:346.1px;font-size:14px;line-height:18px;color:#8a8a8a;transform:scaleX(0.899);">?</span>
<svg class="i" style="left:603px;top:347px" width="14" height="14"><path d="M1 1 L13 13 M13 1 L1 13" stroke="#8a8a8a" stroke-width="1" fill="none"/></svg>
<div class="" style="left:151px;top:385px;width:61px;height:24px;background:#f0f0f0;border:1px solid #d9d9d9;border-bottom:none"></div>
<div class="" style="left:211px;top:385px;width:54px;height:24px;background:#f0f0f0;border:1px solid #d9d9d9;border-bottom:none"></div>
<div class="" style="left:331px;top:385px;width:96px;height:24px;background:#f0f0f0;border:1px solid #d9d9d9;border-bottom:none"></div>
<div class="" style="left:149px;top:408px;width:480px;height:448px;background:#fff;border:1px solid #d9d9d9"></div>
<div class="" style="left:264px;top:383px;width:68px;height:27px;background:#fff;border:1px solid #d9d9d9;border-bottom:none"></div>
<span class="t " style="left:158.0px;top:387.3px;font-size:15px;line-height:19px;color:#000;transform:scaleX(0.885);">General</span>
<span class="t " style="left:219.0px;top:387.3px;font-size:15px;line-height:19px;color:#000;transform:scaleX(0.885);">Object</span>
<span class="t " style="left:273.5px;top:385.3px;font-size:15px;line-height:19px;color:#000;transform:scaleX(0.885);">Security</span>
<span class="t " style="left:336.0px;top:387.3px;font-size:15px;line-height:19px;color:#000;transform:scaleX(0.885);">Attribute Editor</span>
<div class="yl" style="left:261px;top:379px;width:71px;height:33px;"></div>
<div class="g" style="left:167px;top:419px;width:400px;height:15px;"></div>
<span class="t " style="left:167.0px;top:417.3px;font-size:15px;line-height:19px;color:#000;transform:scaleX(0.864);">Group or user names:</span>
<div class="lb" style="left:167px;top:440px;width:446px;height:129px;"></div>
<div class="" style="left:194px;top:442px;width:395px;height:22px;background:#ebebeb"></div>
<div class="layer" style="clip-path:inset(441px 1329px 467px 168px)">
<svg class="i" style="left:174px;top:444px" width="20" height="18"><use href="#ic-prinsel"/></svg>
<span class="t " style="left:197.0px;top:443.5px;font-size:15px;line-height:19px;color:#000;transform:scaleX(0.910);">CREATOR OWNER</span>
<svg class="i" style="left:174px;top:465px" width="20" height="18"><use href="#ic-prin"/></svg>
<span class="t " style="left:197.0px;top:464.9px;font-size:15px;line-height:19px;color:#000;transform:scaleX(0.885);">SELF</span>
<svg class="i" style="left:174px;top:487px" width="20" height="18"><use href="#ic-prin"/></svg>
<span class="t " style="left:197.0px;top:486.3px;font-size:15px;line-height:19px;color:#000;transform:scaleX(0.885);">Authenticated Users</span>
<svg class="i" style="left:174px;top:508px" width="20" height="18"><use href="#ic-prin"/></svg>
<span class="t " style="left:197.0px;top:507.7px;font-size:15px;line-height:19px;color:#000;transform:scaleX(0.885);">SYSTEM</span>
<svg class="i" style="left:174px;top:530px" width="20" height="18"><use href="#ic-prin"/></svg>
<span class="t " style="left:197.0px;top:529.1px;font-size:15px;line-height:19px;color:#000;transform:scaleX(0.885);">Domain Admins (ADAPWORKSHOP\Domain Admins)</span>
<svg class="i" style="left:174px;top:551px" width="20" height="18"><use href="#ic-prin"/></svg>
<span class="t " style="left:197.0px;top:550.5px;font-size:15px;line-height:19px;color:#000;transform:scaleX(0.885);">Enterprise Admins (ADAPWORKSHOP\Enterprise Admins)</span>
</div>
<div class="g" style="left:590px;top:441px;width:20px;height:127px;"></div>
<svg class="i" style="left:594px;top:450px" width="11" height="8"><use href="#sb-u"/></svg>
<svg class="i" style="left:594px;top:552px" width="11" height="8"><use href="#sb-d"/></svg>
<div class="thumb" style="left:590px;top:464px;width:19px;height:31px;"></div>
<div class="btn" style="left:417px;top:578px;width:92px;height:26px;"></div>
<span class="t " style="left:445.0px;top:581.3px;font-size:15px;line-height:19px;color:#000;transform:scaleX(0.885);">Add...</span>
<div class="btn" style="left:519px;top:578px;width:91px;height:26px;"></div>
<span class="t " style="left:539.0px;top:581.3px;font-size:15px;line-height:19px;color:#000;transform:scaleX(0.885);">Remove</span>
<span class="t " style="left:167.5px;top:620.3px;font-size:15px;line-height:19px;color:#000;transform:scaleX(0.877);">Permissions for CREATOR OWNER</span>
<span class="t " style="left:473.5px;top:620.3px;font-size:15px;line-height:19px;color:#000;transform:scaleX(0.851);">Allow</span>
<span class="t " style="left:550.0px;top:620.3px;font-size:15px;line-height:19px;color:#000;transform:scaleX(0.885);">Deny</span>
<div class="lb" style="left:167px;top:642px;width:446px;height:123px;"></div>
<div class="layer" style="clip-path:inset(643px 1328px 271px 168px)">
<span class="t " style="left:182.0px;top:647.4px;font-size:15px;line-height:19px;color:#000;transform:scaleX(0.885);">Full control</span>
<div class="cb" style="left:476px;top:649px;width:16px;height:16px;"></div>
<div class="cb" style="left:551px;top:649px;width:16px;height:16px;"></div>
<span class="t " style="left:182.0px;top:669.9px;font-size:15px;line-height:19px;color:#000;transform:scaleX(0.885);">Read</span>
<div class="cb" style="left:476px;top:672px;width:16px;height:16px;"></div>
<div class="cb" style="left:551px;top:672px;width:16px;height:16px;"></div>
<span class="t " style="left:182.0px;top:692.4px;font-size:15px;line-height:19px;color:#000;transform:scaleX(0.885);">Write</span>
<div class="cb" style="left:476px;top:694px;width:16px;height:16px;"></div>
<div class="cb" style="left:551px;top:694px;width:16px;height:16px;"></div>
<span class="t " style="left:182.0px;top:714.9px;font-size:15px;line-height:19px;color:#000;transform:scaleX(0.885);">Create all child objects</span>
<div class="cb" style="left:476px;top:717px;width:16px;height:16px;"></div>
<div class="cb" style="left:551px;top:717px;width:16px;height:16px;"></div>
<span class="t " style="left:182.0px;top:737.4px;font-size:15px;line-height:19px;color:#000;transform:scaleX(0.885);">Delete all child objects</span>
<div class="cb" style="left:476px;top:739px;width:16px;height:16px;"></div>
<div class="cb" style="left:551px;top:739px;width:16px;height:16px;"></div>
<div class="cb" style="left:476px;top:762px;width:16px;height:16px;"></div>
<div class="cb" style="left:551px;top:762px;width:16px;height:16px;"></div>
</div>
<div class="g" style="left:591px;top:643px;width:20px;height:121px;"></div>
<svg class="i" style="left:595px;top:651px" width="11" height="8"><use href="#sb-u"/></svg>
<svg class="i" style="left:595px;top:749px" width="11" height="8"><use href="#sb-d"/></svg>
<div class="thumb" style="left:591px;top:664px;width:19px;height:67px;"></div>
<span class="t " style="left:167.0px;top:772.9px;font-size:15px;line-height:19px;color:#000;transform:scaleX(0.880);">For special permissions or advanced settings, click</span>
<span class="t " style="left:167.0px;top:788.9px;font-size:15px;line-height:19px;color:#000;transform:scaleX(0.885);">Advanced.</span>
<div class="btn" style="left:500px;top:776px;width:110px;height:26px;"></div>
<span class="t " style="left:523.5px;top:778.9px;font-size:15px;line-height:19px;color:#000;transform:scaleX(0.907);">Advanced</span>
<div class="yl" style="left:492px;top:767px;width:126px;height:45px;"></div>
<div class="btn" style="left:235px;top:867px;width:91px;height:26px;"></div>
<span class="t " style="left:270.0px;top:870.3px;font-size:15px;line-height:19px;color:#000;transform:scaleX(0.885);">OK</span>
<div class="btn" style="left:336px;top:867px;width:91px;height:26px;"></div>
<span class="t " style="left:360.0px;top:870.3px;font-size:15px;line-height:19px;color:#000;transform:scaleX(0.885);">Cancel</span>
<div class="btnd" style="left:438px;top:867px;width:91px;height:26px;"></div>
<span class="t " style="left:466.0px;top:870.3px;font-size:15px;line-height:19px;color:#838383;transform:scaleX(0.885);">Apply</span>
<div class="btnd" style="left:539px;top:867px;width:91px;height:26px;"></div>
<span class="t " style="left:569.0px;top:870.3px;font-size:15px;line-height:19px;color:#838383;transform:scaleX(0.885);">Help</span>
</div>
<div class="layer" id="dlg2" style="clip-path:inset(285px 418px 101px 618px)">
<div class="" style="left:618px;top:285px;width:900px;height:649px;background:#f0f0f0;border:1px solid #8f8f8f"></div>
<div class="" style="left:619px;top:286px;width:898px;height:38px;background:#fff"></div>
<svg class="i" style="left:632px;top:294px" width="16" height="20"><use href="#ic-dlgfolder"/></svg>
<span class="t " style="left:654.3px;top:294.9px;font-size:15.5px;line-height:19px;color:#9a9a9a;transform:scaleX(0.939);-webkit-text-stroke:0;">Advanced Security Settings for Users</span>
<div class="wp" style="left:633px;top:338px;width:870px;height:550px;"></div>
<span class="t " style="left:648.0px;top:371.5px;font-size:15.5px;line-height:19px;color:#000;transform:scaleX(0.929);">Owner:</span>
<span class="t " style="left:757.0px;top:371.5px;font-size:15.5px;line-height:19px;color:#000;transform:scaleX(0.926);">Domain Admins (ADAPWORKSHOP\Domain Admins)</span>
<div class="" style="left:757px;top:410px;width:80px;height:27px;background:#f0f0f0;border:1px solid #d9d9d9"></div>
<span class="t " style="left:654.0px;top:413.5px;font-size:15.5px;line-height:19px;color:#000;transform:scaleX(0.924);">Permissions</span>
<div class="yl" style="left:635px;top:409px;width:122px;height:35px;"></div>
<span class="t " style="left:648.0px;top:457.5px;font-size:15.5px;line-height:19px;color:#000;transform:scaleX(0.979);">For additional information, double-click a permission entry.</span>
<span class="t " style="left:648.0px;top:490.1px;font-size:15.5px;line-height:19px;color:#000;transform:scaleX(0.936);">Permission entries:</span>
<div class="lb" style="left:645px;top:518px;width:850px;height:270px;"></div>
<div class="" style="left:671px;top:519px;width:1px;height:30px;background:#e5e5e5"></div>
<div class="" style="left:733px;top:519px;width:1px;height:30px;background:#e5e5e5"></div>
<span class="t " style="left:681.0px;top:524.1px;font-size:15.5px;line-height:19px;color:#000;transform:scaleX(0.935);">Type</span>
<span class="t " style="left:742.0px;top:524.1px;font-size:15.5px;line-height:19px;color:#000;transform:scaleX(0.944);">Principal</span>
<svg class="i" style="left:652px;top:551.8px" width="20" height="18"><use href="#ic-prin"/></svg>
<span class="t " style="left:680.3px;top:551.1px;font-size:15.5px;line-height:19px;color:#000;transform:scaleX(0.975);">Allow</span>
<span class="t " style="left:742.0px;top:551.1px;font-size:15.5px;line-height:19px;color:#000;transform:scaleX(0.924);">Account Operators (ADAPWORKSHOP\Account Operators)</span>
<svg class="i" style="left:652px;top:575.5px" width="20" height="18"><use href="#ic-prin"/></svg>
<span class="t " style="left:680.3px;top:574.8px;font-size:15.5px;line-height:19px;color:#000;transform:scaleX(0.975);">Allow</span>
<span class="t " style="left:742.0px;top:574.8px;font-size:15.5px;line-height:19px;color:#000;transform:scaleX(0.924);">Account Operators (ADAPWORKSHOP\Account Operators)</span>
<svg class="i" style="left:652px;top:599.2px" width="20" height="18"><use href="#ic-prin"/></svg>
<span class="t " style="left:680.3px;top:598.6px;font-size:15.5px;line-height:19px;color:#000;transform:scaleX(0.975);">Allow</span>
<span class="t " style="left:742.0px;top:598.6px;font-size:15.5px;line-height:19px;color:#000;transform:scaleX(0.918);">Print Operators (ADAPWORKSHOP\Print Operators)</span>
<svg class="i" style="left:652px;top:623.0px" width="20" height="18"><use href="#ic-prin"/></svg>
<span class="t " style="left:680.3px;top:622.3px;font-size:15.5px;line-height:19px;color:#000;transform:scaleX(0.975);">Allow</span>
<span class="t " style="left:742.0px;top:622.3px;font-size:15.5px;line-height:19px;color:#000;transform:scaleX(0.924);">Account Operators (ADAPWORKSHOP\Account Operators)</span>
<svg class="i" style="left:652px;top:646.7px" width="20" height="18"><use href="#ic-prin"/></svg>
<span class="t " style="left:680.3px;top:646.0px;font-size:15.5px;line-height:19px;color:#000;transform:scaleX(0.975);">Allow</span>
<span class="t " style="left:742.0px;top:646.0px;font-size:15.5px;line-height:19px;color:#000;transform:scaleX(0.926);">Domain Admins (ADAPWORKSHOP\Domain Admins)</span>
<svg class="i" style="left:652px;top:670.4px" width="20" height="18"><use href="#ic-prin"/></svg>
<span class="t " style="left:680.3px;top:669.7px;font-size:15.5px;line-height:19px;color:#000;transform:scaleX(0.975);">Allow</span>
<span class="t " style="left:742.0px;top:669.7px;font-size:15.5px;line-height:19px;color:#000;transform:scaleX(0.950);">Authenticated Users</span>
<svg class="i" style="left:652px;top:694.1px" width="20" height="18"><use href="#ic-prin"/></svg>
<span class="t " style="left:680.3px;top:693.4px;font-size:15.5px;line-height:19px;color:#000;transform:scaleX(0.975);">Allow</span>
<span class="t " style="left:742.0px;top:693.4px;font-size:15.5px;line-height:19px;color:#000;transform:scaleX(0.792);">SYSTEM</span>
<svg class="i" style="left:652px;top:717.8px" width="20" height="18"><use href="#ic-prin"/></svg>
<span class="t " style="left:680.3px;top:717.2px;font-size:15.5px;line-height:19px;color:#000;transform:scaleX(0.975);">Allow</span>
<span class="t " style="left:742.0px;top:717.2px;font-size:15.5px;line-height:19px;color:#000;transform:scaleX(0.944);">Pre-Windows 2000 Compatible Access</span>
<svg class="i" style="left:652px;top:741.6px" width="20" height="18"><use href="#ic-prin"/></svg>
<span class="t " style="left:680.3px;top:740.9px;font-size:15.5px;line-height:19px;color:#000;transform:scaleX(0.975);">Allow</span>
<span class="t " style="left:742.0px;top:740.9px;font-size:15.5px;line-height:19px;color:#000;transform:scaleX(0.944);">Pre-Windows 2000 Compatible Access</span>
<svg class="i" style="left:652px;top:765.3px" width="20" height="18"><use href="#ic-prin"/></svg>
<span class="t " style="left:680.3px;top:764.6px;font-size:15.5px;line-height:19px;color:#000;transform:scaleX(0.975);">Allow</span>
<span class="t " style="left:742.0px;top:764.6px;font-size:15.5px;line-height:19px;color:#000;transform:scaleX(0.944);">Pre-Windows 2000 Compatible Access</span>
<div class="btnf" style="left:646px;top:803px;width:95px;height:26px;"></div>
<span class="t " style="left:680.0px;top:806.1px;font-size:15.5px;line-height:19px;color:#000;transform:scaleX(0.979);">Add</span>
<div class="yl" style="left:638px;top:796px;width:112px;height:40px;"></div>
<div class="btn" style="left:752px;top:803px;width:95px;height:26px;"></div>
<span class="t " style="left:772.0px;top:806.1px;font-size:15.5px;line-height:19px;color:#000;transform:scaleX(0.922);">Remove</span>
<div class="btn" style="left:646px;top:845px;width:160px;height:26px;"></div>
<span class="t " style="left:668.0px;top:849.1px;font-size:15.5px;line-height:19px;color:#000;transform:scaleX(0.952);">Disable inheritance</span>
</div>
<div class="layer" id="dlg3" style="clip-path:inset(247px 12px 47px 760px)">
<div class="" style="left:760px;top:247px;width:1146px;height:741px;background:#f0f0f0;border:1px solid #1883d7"></div>
<div class="" style="left:761px;top:248px;width:1144px;height:37px;background:#fff"></div>
<svg class="i" style="left:773px;top:256px" width="16" height="20"><use href="#ic-dlgfolder"/></svg>
<span class="t " style="left:796.0px;top:257.1px;font-size:15.5px;line-height:19px;color:#000;transform:scaleX(0.917);">Permission Entry for Users</span>
<svg class="i" style="left:1750px;top:255px" width="140" height="22"><g fill="none" stroke-width="1"><path d="M7.500 10.5 H19.5" stroke="#c8c8c8"/><path d="M63.500 5.500 H74.5 V16.5 H63.500 Z" stroke="#000" stroke-width="1.2"/><path d="M120 5 L132 17 M132 5 L120 17" stroke="#000" stroke-width="1.1"/></g></svg>
<div class="wp" style="left:775px;top:300px;width:1095px;height:142px;"></div>
<span class="t " style="left:790.0px;top:321.1px;font-size:15.5px;line-height:19px;color:#000;transform:scaleX(0.931);">Principal:</span>
<span class="t " style="left:790.0px;top:362.1px;font-size:15.5px;line-height:19px;color:#000;transform:scaleX(0.915);">Type:</span>
<span class="t " style="left:790.0px;top:404.1px;font-size:15.5px;line-height:19px;color:#000;transform:scaleX(0.963);">Applies to:</span>
<span class="t " style="left:874.6px;top:321.1px;font-size:15.5px;line-height:19px;color:#000;transform:scaleX(0.963);">ADAudit Plus (adauditplus@adapworkshop.com)</span>
<span class="t " style="left:1214.0px;top:321.1px;font-size:15.5px;line-height:19px;color:#1a75cf;transform:scaleX(0.940);">Select a principal</span>
<div class="btn" style="left:871px;top:356px;width:350px;height:29px;"></div>
<span class="t " style="left:876.4px;top:361.1px;font-size:15.5px;line-height:19px;color:#000;transform:scaleX(0.975);">Allow</span>
<svg class="i" style="left:1203px;top:367px" width="12" height="7"><use href="#cmb"/></svg>
<div class="btn" style="left:871px;top:398px;width:350px;height:29px;"></div>
<span class="t " style="left:876.0px;top:403.1px;font-size:15.5px;line-height:19px;color:#000;transform:scaleX(0.943);">Descendant Group objects</span>
<div class="" style="left:874px;top:402px;width:322px;height:22px;border:1px dotted #222"></div>
<svg class="i" style="left:1203px;top:409px" width="12" height="7"><use href="#cmb"/></svg>
<div class="yl" style="left:863px;top:314px;width:480px;height:122px;"></div>
<div class="wp" style="left:775px;top:470px;width:1095px;height:469px;"></div>
<div class="layer" style="clip-path:inset(471px 49px 97px 775px)">
<div class="cb" style="left:870px;top:475px;width:16px;height:16px;"></div>
<span class="t " style="left:890.4px;top:472.3px;font-size:15.5px;line-height:19px;color:#000;transform:scaleX(0.934);">Read Group name (pre-Windows 2000)</span>
<div class="cb" style="left:1330px;top:475px;width:16px;height:16px;"></div>
<span class="t " style="left:1350.4px;top:472.3px;font-size:15.5px;line-height:19px;color:#000;transform:scaleX(0.953);">Write msDS-NonMembers</span>
<div class="cb" style="left:870px;top:502px;width:16px;height:16px;"></div>
<span class="t " style="left:890.4px;top:498.5px;font-size:15.5px;line-height:19px;color:#000;transform:scaleX(0.948);">Write Group name (pre-Windows 2000)</span>
<div class="cb" style="left:1330px;top:502px;width:16px;height:16px;"></div>
<span class="t " style="left:1350.4px;top:498.5px;font-size:15.5px;line-height:19px;color:#000;transform:scaleX(0.920);">Read msDS-NonMembersBL</span>
<div class="cb" style="left:870px;top:528px;width:16px;height:16px;"></div>
<span class="t " style="left:890.4px;top:524.8px;font-size:15.5px;line-height:19px;color:#000;transform:scaleX(0.971);">Read groupAttributes</span>
<div class="cb" style="left:1330px;top:528px;width:16px;height:16px;"></div>
<span class="t " style="left:1350.4px;top:524.8px;font-size:15.5px;line-height:19px;color:#000;transform:scaleX(0.908);">Read msDS-ObjectReferenceBL</span>
<div class="cb" style="left:870px;top:554px;width:16px;height:16px;"></div>
<span class="t " style="left:890.4px;top:551.0px;font-size:15.5px;line-height:19px;color:#000;transform:scaleX(0.994);">Write groupAttributes</span>
<div class="cb" style="left:1330px;top:554px;width:16px;height:16px;"></div>
<span class="t " style="left:1350.4px;top:551.0px;font-size:15.5px;line-height:19px;color:#000;transform:scaleX(0.913);">Read msDS-ObjectSoa</span>
<div class="cb" style="left:870px;top:580px;width:16px;height:16px;"></div>
<span class="t " style="left:890.4px;top:577.2px;font-size:15.5px;line-height:19px;color:#000;transform:scaleX(0.948);">Read groupType</span>
<div class="cb" style="left:1330px;top:580px;width:16px;height:16px;"></div>
<span class="t " style="left:1350.4px;top:577.2px;font-size:15.5px;line-height:19px;color:#000;transform:scaleX(0.934);">Write msDS-ObjectSoa</span>
<div class="cb" style="left:870px;top:606px;width:16px;height:16px;"></div>
<span class="t " style="left:890.4px;top:603.4px;font-size:15.5px;line-height:19px;color:#000;transform:scaleX(0.978);">Write groupType</span>
<div class="cb" style="left:1330px;top:606px;width:16px;height:16px;"></div>
<span class="t " style="left:1350.4px;top:603.4px;font-size:15.5px;line-height:19px;color:#000;transform:scaleX(0.918);">Read msDS-OIDToGroupLinkBl</span>
<div class="cb" style="left:870px;top:633px;width:16px;height:16px;"></div>
<span class="t " style="left:890.4px;top:629.6px;font-size:15.5px;line-height:19px;color:#000;transform:scaleX(0.903);">Read isRecycled</span>
<div class="cb" style="left:1330px;top:633px;width:16px;height:16px;"></div>
<span class="t " style="left:1350.4px;top:629.6px;font-size:15.5px;line-height:19px;color:#000;transform:scaleX(0.909);">Read msDS-OperationsForAzRoleBL</span>
<div class="cb" style="left:870px;top:659px;width:16px;height:16px;"></div>
<span class="t " style="left:890.4px;top:655.9px;font-size:15.5px;line-height:19px;color:#000;transform:scaleX(0.931);">Write isRecycled</span>
<div class="cb" style="left:1330px;top:659px;width:16px;height:16px;"></div>
<span class="t " style="left:1350.4px;top:655.9px;font-size:15.5px;line-height:19px;color:#000;transform:scaleX(0.910);">Read msDS-OperationsForAzTaskBL</span>
<div class="cb" style="left:870px;top:685px;width:16px;height:16px;"></div>
<span class="t " style="left:890.4px;top:682.1px;font-size:15.5px;line-height:19px;color:#000;transform:scaleX(0.911);">Read labeledURI</span>
<div class="cb" style="left:1330px;top:685px;width:16px;height:16px;"></div>
<span class="t " style="left:1350.4px;top:682.1px;font-size:15.5px;line-height:19px;color:#000;transform:scaleX(0.941);">Read msDS-parentdistname</span>
<div class="cb" style="left:870px;top:711px;width:16px;height:16px;"></div>
<span class="t " style="left:890.4px;top:708.3px;font-size:15.5px;line-height:19px;color:#000;transform:scaleX(0.939);">Write labeledURI</span>
<div class="cb" style="left:1330px;top:711px;width:16px;height:16px;"></div>
<span class="t " style="left:1350.4px;top:708.3px;font-size:15.5px;line-height:19px;color:#000;transform:scaleX(0.958);">Write msDS-parentdistname</span>
<div class="cb" style="left:870px;top:738px;width:16px;height:16px;"></div>
<span class="t " style="left:890.4px;top:734.5px;font-size:15.5px;line-height:19px;color:#000;transform:scaleX(0.925);">Read Managed By</span>
<div class="cb" style="left:1330px;top:738px;width:16px;height:16px;"></div>
<span class="t " style="left:1350.4px;top:734.5px;font-size:15.5px;line-height:19px;color:#000;transform:scaleX(0.933);">Read msDS-PrimaryComputer</span>
<div class="cb" style="left:870px;top:764px;width:16px;height:16px;"></div>
<span class="t " style="left:890.4px;top:760.7px;font-size:15.5px;line-height:19px;color:#000;transform:scaleX(0.951);">Write Managed By</span>
<div class="cb" style="left:1330px;top:764px;width:16px;height:16px;"></div>
<span class="t " style="left:1350.4px;top:760.7px;font-size:15.5px;line-height:19px;color:#000;transform:scaleX(0.948);">Write msDS-PrimaryComputer</span>
<div class="cb" style="left:870px;top:790px;width:16px;height:16px;"></div>
<span class="t " style="left:890.4px;top:787.0px;font-size:15.5px;line-height:19px;color:#000;transform:scaleX(0.944);">Read memberOf</span>
<div class="cb" style="left:1330px;top:790px;width:16px;height:16px;"></div>
<span class="t " style="left:1350.4px;top:787.0px;font-size:15.5px;line-height:19px;color:#000;transform:scaleX(0.924);">Read msDS-PrincipalName</span>
<div class="cb" style="left:870px;top:816px;width:16px;height:16px;"></div>
<span class="t " style="left:890.4px;top:813.2px;font-size:15.5px;line-height:19px;color:#000;transform:scaleX(0.934);">Read Members</span>
<div class="cb" style="left:1330px;top:816px;width:16px;height:16px;"></div>
<span class="t " style="left:1350.4px;top:813.2px;font-size:15.5px;line-height:19px;color:#000;transform:scaleX(0.942);">Write msDS-PrincipalName</span>
<div class="cb" style="left:870px;top:842px;width:16px;height:16px;"></div>
<span class="t " style="left:890.4px;top:839.4px;font-size:15.5px;line-height:19px;color:#000;transform:scaleX(0.966);">Write Members</span>
<svg class="i" style="left:870px;top:842px" width="16" height="16"><path d="M3.200 8 L6.600 11.4 L13 4.400" fill="none" stroke="#222" stroke-width="1.3"/></svg>
<div class="" style="left:889px;top:840px;width:104px;height:21px;border:1px dotted #222"></div>
<div class="cb" style="left:1330px;top:842px;width:16px;height:16px;"></div>
<span class="t " style="left:1350.4px;top:839.4px;font-size:15.5px;line-height:19px;color:#000;transform:scaleX(0.907);">Read msDS-PSOApplied</span>
<div class="cb" style="left:870px;top:869px;width:16px;height:16px;"></div>
<span class="t " style="left:890.4px;top:865.6px;font-size:15.5px;line-height:19px;color:#000;transform:scaleX(0.947);">Read memberUid</span>
<div class="cb" style="left:1330px;top:869px;width:16px;height:16px;"></div>
<span class="t " style="left:1350.4px;top:865.6px;font-size:15.5px;line-height:19px;color:#000;transform:scaleX(0.942);">Read msDS-ReplAttributeMetaData</span>
<div class="cb" style="left:870px;top:895px;width:16px;height:16px;"></div>
<span class="t " style="left:890.4px;top:891.8px;font-size:15.5px;line-height:19px;color:#000;transform:scaleX(0.975);">Write memberUid</span>
<div class="cb" style="left:1330px;top:895px;width:16px;height:16px;"></div>
<span class="t " style="left:1350.4px;top:891.8px;font-size:15.5px;line-height:19px;color:#000;transform:scaleX(0.955);">Write msDS-ReplAttributeMetaData</span>
<div class="cb" style="left:870px;top:924px;width:16px;height:16px;"></div>
<span class="t " style="left:890.4px;top:921.1px;font-size:15.5px;line-height:19px;color:#000;transform:scaleX(0.914);">Read msCOM-UserLink</span>
<div class="cb" style="left:1330px;top:924px;width:16px;height:16px;"></div>
<span class="t " style="left:1350.4px;top:921.1px;font-size:15.5px;line-height:19px;color:#000;transform:scaleX(0.939);">Write msDS-ReplValueMetaData</span>
</div>
<div class="yl" style="left:857px;top:832px;width:160px;height:38px;"></div>
<div class="" style="left:1884px;top:285px;width:1px;height:653px;background:#fbfbfb"></div>
<svg class="i" style="left:1889px;top:293px" width="11" height="8"><use href="#sb-u"/></svg>
<svg class="i" style="left:1889px;top:924px" width="11" height="8"><use href="#sb-d"/></svg>
<div class="thumb" style="left:1885px;top:307px;width:19px;height:149px;"></div>
<div class="" style="left:761px;top:938px;width:1144px;height:2px;background:#a9a9a9"></div>
<div class="btnf" style="left:1700px;top:951px;width:88px;height:26px;"></div>
<span class="t " style="left:1734.6px;top:954.1px;font-size:15.5px;line-height:19px;color:#000;transform:scaleX(0.848);">OK</span>
<div class="btn" style="left:1801px;top:951px;width:89px;height:26px;"></div>
<span class="t " style="left:1823.0px;top:954.1px;font-size:15.5px;line-height:19px;color:#000;transform:scaleX(0.901);">Cancel</span>
</div>
<span class="t " style="left:1553.4px;top:925.3px;font-size:24px;line-height:28px;color:rgba(105,105,105,0.5);transform:scaleX(1.030);-webkit-text-stroke:0;">Activate Windows</span>
<span class="t " style="left:1553.0px;top:957.8px;font-size:18px;line-height:22px;color:rgba(105,105,105,0.5);-webkit-text-stroke:0;">Go to Settings to activate Windows.</span>
</div>
</body>
</html>
